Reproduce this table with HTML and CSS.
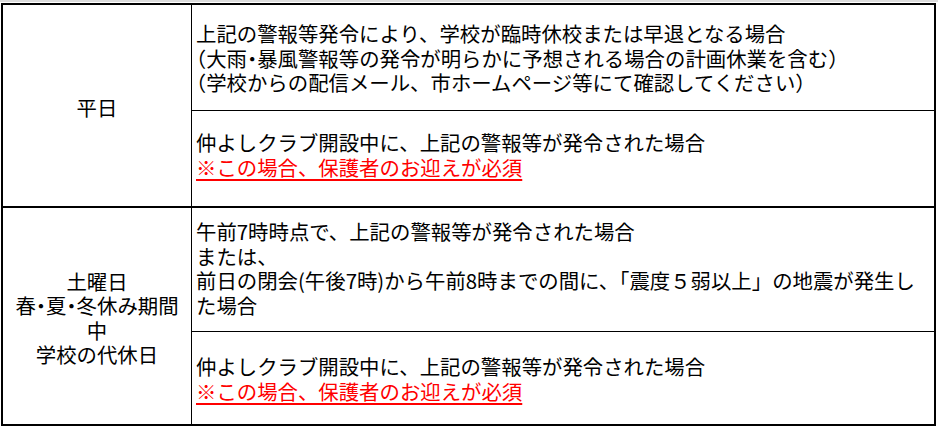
FILE: index.html
```html
<!DOCTYPE html>
<html lang="ja">
<head>
<meta charset="utf-8">
<title>警報等発令時の対応</title>
<link rel="stylesheet" href="styles.css">
</head>
<body>
<div class="rule"></div>
<div class="table">
  <div class="group g1">
    <div class="label"><div class="label-text">平日</div></div>
    <div class="details">
      <div class="cell c1">
        <p>上記の警報等発令により、学校が臨時休校または早退となる場合</p>
        <p><span class="n">（</span>大雨<span class="n">・</span>暴風警報等の発令が明らかに予想される場合の計画休業を含む<span class="n">）</span></p>
        <p><span class="n">（</span>学校からの配信メール、市ホームページ等にて確認してください<span class="n">）</span></p>
      </div>
      <div class="cell c2">
        <p>仲よしクラブ開設中に、上記の警報等が発令された場合</p>
        <p><span class="note">※この場合、保護者のお迎えが必須</span></p>
      </div>
    </div>
  </div>
  <div class="group g2">
    <div class="label"><div class="label-text">土曜日<br>春<span class="n">・</span>夏<span class="n">・</span>冬休み期間<br>中<br>学校の代休日</div></div>
    <div class="details">
      <div class="cell c1">
        <p>午前7時時点で、上記の警報等が発令された場合</p>
        <p>または、</p>
        <p>前日の閉会(午後7時)から午前8時までの間に、「震度５弱以上」の地震が発生し<br>た場合</p>
      </div>
      <div class="cell c2">
        <p>仲よしクラブ開設中に、上記の警報等が発令された場合</p>
        <p><span class="note">※この場合、保護者のお迎えが必須</span></p>
      </div>
    </div>
  </div>
</div>
</body>
</html>
```

FILE: styles.css
```css
html, body {
  margin: 0;
  background: #fff;
}

body {
  font-family: "Noto Sans CJK JP", "Noto Sans", sans-serif;
  font-size: 20.4px;
  color: #000;
}

.rule {
  height: 2px;
  background: #dcdcdc;
  margin-bottom: 1px;
}

.table {
  margin-left: 1px;
  width: 935px;
  box-sizing: border-box;
  border: 2px solid #000;
}

.group {
  display: flex;
}

.group + .group {
  border-top: 2px solid #000;
}

.label {
  width: 189px;
  flex: none;
  border-right: 1px solid #000;
  display: flex;
  align-items: center;
  justify-content: center;
  padding-top: 3px;
  box-sizing: border-box;
}

.label-text {
  text-align: center;
  line-height: 24.5px;
  white-space: nowrap;
}

.details {
  flex: 1;
  display: flex;
  flex-direction: column;
  min-width: 0;
}

.cell {
  display: flex;
  flex-direction: column;
  justify-content: flex-start;
  padding: 0 4px;
  line-height: 24.5px;
  box-sizing: border-box;
}

.cell + .cell {
  border-top: 1px solid #000;
}

.cell p {
  margin: 0;
  white-space: nowrap;
}

.g1 .c1 { height: 105px; padding-top: 16px; }
.g1 .c2 { height: 96px; padding-top: 19px; }
.g2 .c1 { height: 123px; padding-top: 11px; }
.g2 .c2 { height: 93px; padding-top: 22px; }

.n {
  font-feature-settings: "halt" 1;
}

.note {
  color: #f00;
  text-decoration: underline;
  text-underline-offset: 3px;
}
```
